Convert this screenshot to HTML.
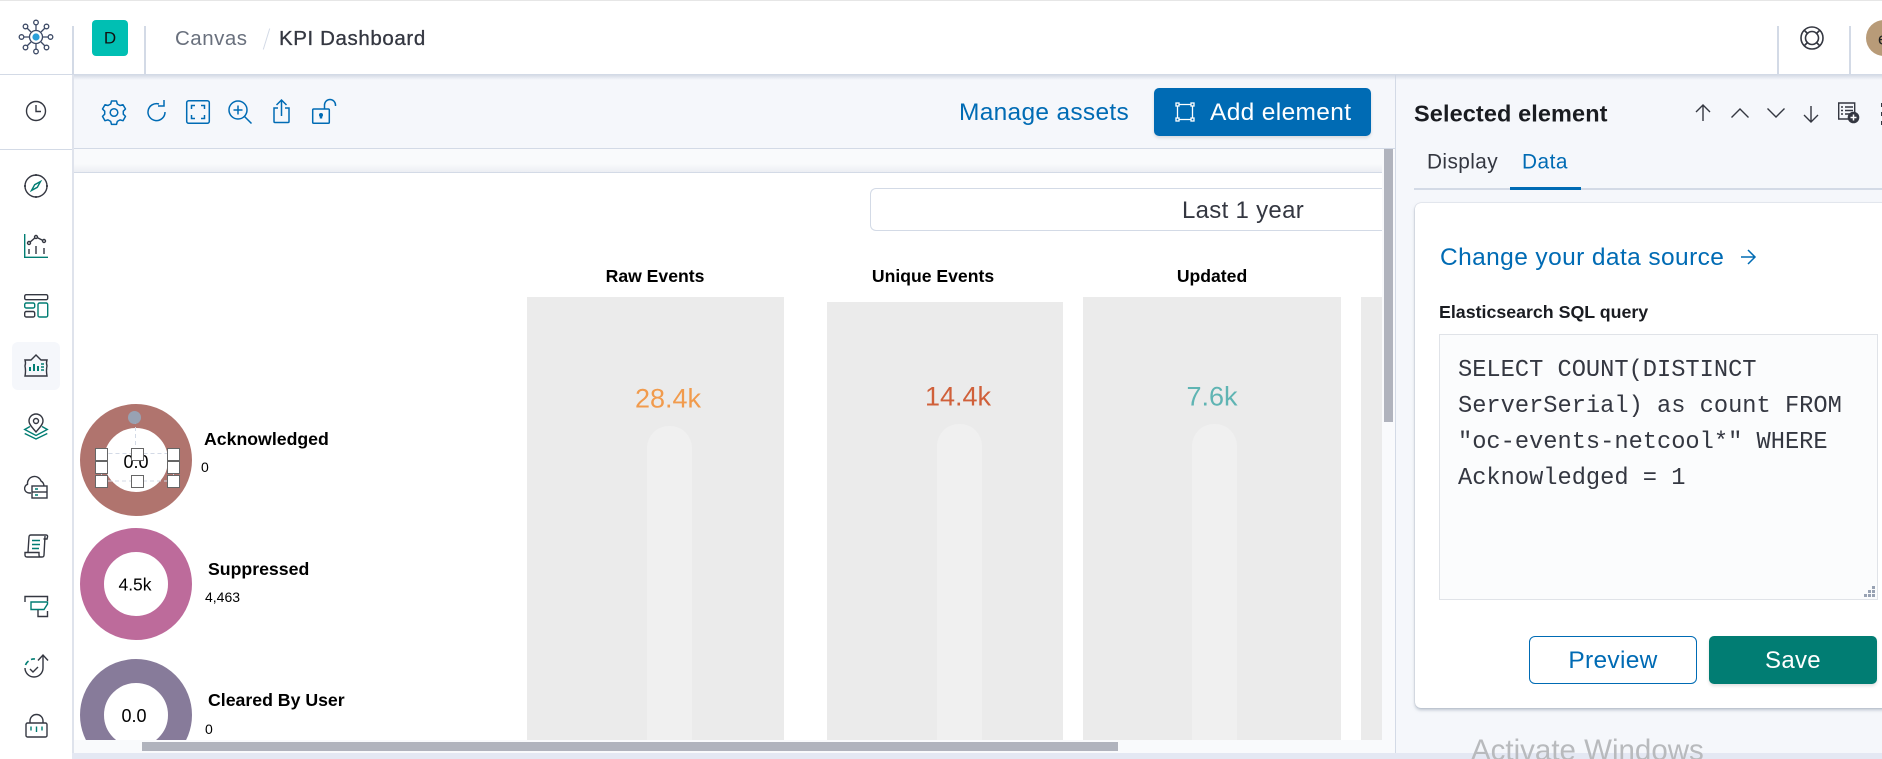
<!DOCTYPE html>
<html><head><meta charset="utf-8"><title>KPI Dashboard</title>
<style>
html,body{margin:0;padding:0;background:#fff}
#p{position:relative;width:1882px;height:759px;overflow:hidden;background:#fff;font-family:"Liberation Sans",sans-serif}
#p div,#p svg,#p span.t{position:absolute}
.t{white-space:nowrap;line-height:1}
.c{transform:translate(-50%,-50%)}
.v{transform:translateY(-50%)}
svg{fill:none;overflow:visible}
.b{stroke:#343741;stroke-width:1.4}
.g{stroke:#017d73;stroke-width:1.4}
.u{stroke:#006bb4;stroke-width:1.5}
.h{width:11px;height:11px;background:#fff;border:1px solid #666;box-sizing:content-box}
</style></head><body><div id="p">

<!-- regions -->
<div style="left:0;top:0;width:1882px;height:1px;background:#e6e6e6"></div>
<div style="left:72px;top:75px;width:1323px;height:73px;background:#f5f7fb"></div>
<div style="left:72px;top:148px;width:1323px;height:1px;background:#d3dae6"></div>
<div style="left:72px;top:149px;width:1323px;height:23px;background:linear-gradient(#f9fafc 65%,#eceef3)"></div>
<div style="left:72px;top:172px;width:1323px;height:1px;background:#d3dae6"></div>
<div style="left:1395px;top:75px;width:487px;height:678px;background:#f5f7fb"></div>
<div style="left:1395px;top:75px;width:1px;height:678px;background:#d3dae6"></div>
<div style="left:72px;top:74px;width:1810px;height:6px;background:linear-gradient(#cfd5e2,#f5f7fb00)"></div>
<div style="left:0;top:74px;width:1882px;height:1px;background:#d3dae6"></div>
<div style="left:72px;top:26px;width:2px;height:48px;background:#d3dae6"></div>
<div style="left:144px;top:26px;width:2px;height:48px;background:#d3dae6"></div>
<div style="left:1777px;top:26px;width:2px;height:48px;background:#d3dae6"></div>
<div style="left:1849px;top:26px;width:2px;height:48px;background:#d3dae6"></div>
<div style="left:72px;top:75px;width:2px;height:684px;background:#dfe3ec"></div>
<div style="left:0;top:149px;width:72px;height:1px;background:#d3dae6"></div>
<div style="left:12px;top:342px;width:48px;height:48px;border-radius:6px;background:#f5f7fb"></div>

<!-- header -->
<svg class="i" style="left:18px;top:19px" width="36" height="36" viewBox="0 0 36 36">
<circle cx="18" cy="18" r="6.500" stroke="#3d4a66" stroke-width="1.300"/><circle cx="18" cy="18" r="3.600" fill="#2b9ed8"/>
<g stroke="#3d4a66" stroke-width="1.300"><path d="M18 6v5M18 25v5M6 18h5M25 18h5M9 9l4 4M27 9l-4 4M9 27l4-4M27 27l-4-4"/>
<circle cx="18" cy="3.500" r="2.300"/><circle cx="18" cy="32.500" r="2.300"/><circle cx="3.500" cy="18" r="2.300"/><circle cx="32.500" cy="18" r="2.300"/>
<circle cx="7.500" cy="7.500" r="2.300"/><circle cx="28.500" cy="7.500" r="2.300"/><circle cx="7.500" cy="28.500" r="2.300"/><circle cx="28.500" cy="28.500" r="2.300"/></g></svg>
<div style="left:92px;top:20px;width:36px;height:36px;border-radius:4px;background:#00bfb3"></div>
<span class="t c" style="left:110px;top:38px;font-size:17px;color:#111">D</span>
<span class="t v" style="left:175px;top:39px;font-size:20.500px;color:#69707d;letter-spacing:.5px">Canvas</span>
<div style="left:266px;top:28px;width:1px;height:22px;background:#d3dae6;transform:rotate(17deg)"></div>
<span class="t v" style="left:279px;top:39px;font-size:20.500px;color:#343741;letter-spacing:.6px;-webkit-text-stroke:.3px #343741">KPI Dashboard</span>
<svg style="left:1800px;top:26px" width="24" height="24" viewBox="0 0 24 24"><g stroke="#343741" stroke-width="1.600"><circle cx="12" cy="12" r="11"/><circle cx="12" cy="12" r="6.500"/><path d="M4 4l4 4M20 4l-4 4M4 20l4-4M20 20l-4-4"/></g></svg>
<div style="left:1866px;top:20px;width:36px;height:36px;border-radius:50%;background:#b89b78"></div>
<span class="t v" style="left:1878px;top:39px;font-size:17px;color:#222">e</span>

<!-- sidebar icons -->
<svg style="left:25px;top:100px" width="22" height="22" viewBox="0 0 22 22"><circle cx="11" cy="11" r="9.500" class="b"/><path d="M11 5v6.500h5" class="b"/></svg>
<svg style="left:24px;top:174px" width="24" height="24" viewBox="0 0 24 24"><circle cx="12" cy="12" r="11" class="b" stroke-width="1.200"/><path d="M12 0v2M12 22v2M0 12h2M22 12h2" class="b"/><path d="M16.500 7.500l-3.200 5.800-5.800 3.200 3.200-5.800z" class="g" stroke-width="1.200"/></svg>
<svg style="left:24px;top:234px" width="24" height="24" viewBox="0 0 24 24"><path d="M.7 0v23.300h23.300" class="g"/><path d="M5 9l7-6 8 4M5 20v-5M12 20v-8M20 20v-6" class="b"/><circle cx="5" cy="9" r="1.500" class="b" fill="#fff"/><circle cx="12" cy="3" r="1.500" class="b" fill="#fff"/><circle cx="20" cy="7" r="1.500" class="b" fill="#fff"/></svg>
<svg style="left:24px;top:294px" width="24" height="24" viewBox="0 0 24 24"><rect x=".7" y=".7" width="23" height="5" rx="1.500" class="b"/><rect x=".7" y="9" width="10" height="5" rx="1.500" class="g"/><rect x=".7" y="17.500" width="10" height="5.500" rx="1.500" class="b"/><rect x="14" y="9" width="9.700" height="14" rx="1.500" class="g"/></svg>
<svg style="left:24px;top:354px" width="24" height="24" viewBox="0 0 24 24"><path d="M1 6h6l5-5 5 5h6q-1 3 0 6-1 4 0 10H1q1-5 0-10 1-3 0-6z" class="b"/><path d="M6 17v-4M10 17v-7M14 17v-5" stroke="#017d73" stroke-width="2"/><path d="M17 10h3M17 13h3M17 16h3" class="g"/></svg>
<svg style="left:24px;top:414px" width="24" height="26" viewBox="0 0 24 26"><path d="M12 18C9 14 5 11 5 7a7 7 0 0 1 14 0c0 4-4 7-7 11z" class="b"/><circle cx="12" cy="7" r="2.500" class="b"/><path d="M6 12.500L.7 15.500 12 21.500l11.300-6L18 12.500M.7 19.500L12 25l11.300-5.500" class="g"/></svg>
<svg style="left:24px;top:474px" width="24" height="24" viewBox="0 0 24 24"><path d="M7 19H5a4.500 4.500 0 0 1-1.500-8.700 7 7 0 0 1 13.500-3.300 6 6 0 0 1 3 5" class="b"/><rect x="8" y="12" width="15" height="12" class="b" fill="#fff"/><path d="M8 18h15" class="b"/><path d="M11 15h3M11 21h3" class="g"/></svg>
<svg style="left:24px;top:534px" width="24" height="24" viewBox="0 0 24 24"><path d="M4 18L5 3q0-2 2-2h15q2 0 1.500 2l-.5 2h-3.500M21 2l-1 19q0 2-2 2H3q-2 0-2-2v-2.500h14V21q0 2 2 2" class="b"/><path d="M8 6.500h8M8 10.500h8M8 14.500h7" stroke="#017d73" stroke-width="1.600"/></svg>
<svg style="left:24px;top:594px" width="24" height="24" viewBox="0 0 24 24"><path d="M1 8V2.500h22.500V7" class="b"/><path d="M7 8h16.500v2L20 15.500H7z" class="g"/><path d="M14 16v6.500h9.500V17" class="b"/></svg>
<svg style="left:24px;top:654px" width="24" height="26" viewBox="0 0 24 26"><path d="M19 1v13a9 9 0 1 1-18 0" class="b"/><path d="M14 6.500L19 1l5 5.500M6 15l3 3 5-5" class="b"/><path d="M1.500 11a9 9 0 0 1 3-4M7 5.500a9 9 0 0 1 4-.5" stroke="#017d73" stroke-width="1.600"/></svg>
<svg style="left:25px;top:714px" width="24" height="24" viewBox="0 0 24 24"><path d="M5 9V7a6 6 0 0 1 13 0v2" class="b"/><rect x="1" y="9" width="21" height="14" rx="1.500" class="b"/><path d="M6 12.500v4M11.500 12.500v5.500M17 12.500v4" class="g"/></svg>

<!-- toolbar icons -->
<svg style="left:102px;top:100px" width="24" height="24" viewBox="0 0 24 24"><path d="M9.500 1h5l.8 3 2.700 1.500 3-.8 2.500 4.300-2.200 2.200v3l2.200 2.200-2.500 4.300-3-.8-2.700 1.500-.8 3h-5l-.8-3L6 19.900l-3 .8L.5 16.400l2.200-2.200v-3L.5 9 3 4.700l3 .8L8.700 4z" class="u" stroke-linejoin="round"/><circle cx="12" cy="12.500" r="3.800" class="u"/></svg>
<svg style="left:147px;top:100px" width="19" height="22" viewBox="0 0 19 22"><path d="M12 4A8.500 8.500 0 1 0 18 12" class="u"/><path d="M17 0v6h-6" class="u"/></svg>
<svg style="left:186px;top:100px" width="24" height="24" viewBox="0 0 24 24"><rect x=".7" y=".7" width="22.600" height="22.600" rx="2" class="u"/><path d="M5.500 9V5.500H9M15 5.500h3.500V9M18.500 15v3.500H15M9 18.500H5.500V15" class="u"/></svg>
<svg style="left:228px;top:100px" width="24" height="24" viewBox="0 0 24 24"><circle cx="10" cy="10" r="9" class="u"/><path d="M10 5.500v9M5.500 10h9M16.500 16.500l7 7" class="u"/></svg>
<svg style="left:273px;top:99px" width="17" height="24" viewBox="0 0 17 24"><path d="M8.500 17V1M3.500 6l5-5 5 5M5 9H1v13.500q0 1 1 1h13q1 0 1-1V9h-4" class="u"/></svg>
<svg style="left:312px;top:100px" width="25" height="24" viewBox="0 0 25 24"><rect x=".7" y="9" width="16.600" height="14.300" rx="1" class="u"/><path d="M12.500 9V5a5.500 5.500 0 0 1 11 0v1" class="u"/><circle cx="9" cy="15" r="2" fill="#006bb4"/><rect x="7.800" y="15" width="2.400" height="3.500" fill="#006bb4"/></svg>

<span class="t v" style="left:959px;top:113px;font-size:24.500px;color:#006bb4;letter-spacing:.3px">Manage assets</span>
<div style="left:1154px;top:88px;width:217px;height:48px;border-radius:5px;background:#006bb4;box-shadow:0 2px 3px #0000001f"></div>
<svg style="left:1175px;top:102px" width="20" height="20" viewBox="0 0 20 20"><g stroke="#fff" stroke-width="1.300"><rect x="1" y="1" width="3" height="3"/><rect x="16" y="1" width="3" height="3"/><rect x="1" y="16" width="3" height="3"/><rect x="16" y="16" width="3" height="3"/><path d="M4 2.500h12M4 17.500h12M2.500 4v12M17.500 4v12"/></g></svg>
<span class="t v" style="left:1210px;top:113px;font-size:24.500px;color:#fff;letter-spacing:.35px">Add element</span>

<!-- canvas: date filter -->
<div style="left:870px;top:188px;width:512px;height:41px;border:1px solid #d3dae6;border-right:0;border-radius:6px 0 0 6px;background:#fff"></div>
<span class="t c" style="left:1243px;top:211px;font-size:24px;color:#343741;letter-spacing:.3px">Last 1 year</span>

<!-- bars -->
<div style="left:527px;top:297px;width:257px;height:443px;background:#ebebeb"></div>
<div style="left:827px;top:302px;width:236px;height:438px;background:#ebebeb"></div>
<div style="left:1083px;top:297px;width:258px;height:443px;background:#ebebeb"></div>
<div style="left:1361px;top:297px;width:21px;height:443px;background:#ebebeb"></div>
<div style="left:647px;top:426px;width:45px;height:314px;border-radius:22px 22px 0 0;background:#f0f0f0"></div>
<div style="left:937px;top:424px;width:45px;height:316px;border-radius:22px 22px 0 0;background:#f0f0f0"></div>
<div style="left:1192px;top:424px;width:45px;height:316px;border-radius:22px 22px 0 0;background:#f0f0f0"></div>

<span class="t c" style="left:655px;top:277px;font-size:17.600px;font-weight:bold;color:#000">Raw Events</span>
<span class="t c" style="left:933px;top:277px;font-size:17.600px;font-weight:bold;color:#000">Unique Events</span>
<span class="t c" style="left:1212px;top:277px;font-size:17.600px;font-weight:bold;color:#000">Updated</span>
<span class="t c" style="left:668px;top:399px;font-size:27px;color:#f19b4d">28.4k</span>
<span class="t c" style="left:958px;top:397px;font-size:27px;color:#d0603a">14.4k</span>
<span class="t c" style="left:1212px;top:397px;font-size:27px;color:#5fb4b3">7.6k</span>

<!-- donuts -->
<div style="left:80px;top:404px;width:64px;height:64px;border:24px solid #b0746e;border-radius:50%"></div>
<div style="left:80px;top:528px;width:64px;height:64px;border:24px solid #bd6b9b;border-radius:50%"></div>
<div style="left:80px;top:659px;width:64px;height:64px;border:24px solid #877b9a;border-radius:50%"></div>
<span class="t c" style="left:136px;top:462px;font-size:18px;color:#000">0.0</span>
<span class="t c" style="left:135px;top:585px;font-size:17.500px;color:#000">4.5k</span>
<span class="t c" style="left:134px;top:716px;font-size:18px;color:#000">0.0</span>
<span class="t v" style="left:204px;top:440px;font-size:17.700px;font-weight:bold;color:#000">Acknowledged</span>
<span class="t v" style="left:201px;top:467px;font-size:14px;color:#000">0</span>
<span class="t v" style="left:208px;top:570px;font-size:17.700px;font-weight:bold;color:#000">Suppressed</span>
<span class="t v" style="left:205px;top:597px;font-size:14px;color:#000">4,463</span>
<span class="t v" style="left:208px;top:701px;font-size:17.700px;font-weight:bold;color:#000">Cleared By User</span>
<span class="t v" style="left:205px;top:729px;font-size:14px;color:#000">0</span>

<!-- selection -->
<svg style="left:95px;top:410px" width="90" height="80"><g stroke="#d3dae6" stroke-width="1" stroke-dasharray="4 3"><rect x="6.500" y="43.500" width="72" height="27.500"/><path d="M40.500 10v33"/></g></svg>
<div style="left:128px;top:411px;width:13px;height:13px;border-radius:50%;background:#98a2b3"></div>
<div class="h" style="left:95px;top:448px"></div>
<div class="h" style="left:131px;top:448px"></div>
<div class="h" style="left:167px;top:448px"></div>
<div class="h" style="left:95px;top:461px"></div>
<div class="h" style="left:167px;top:461px"></div>
<div class="h" style="left:95px;top:475px"></div>
<div class="h" style="left:131px;top:475px"></div>
<div class="h" style="left:167px;top:475px"></div>

<!-- scrollbars -->
<div style="left:74px;top:740px;width:1321px;height:13px;background:#f9fafc"></div>
<div style="left:142px;top:742px;width:976px;height:9px;background:#b0b3bd"></div>
<div style="left:1382px;top:149px;width:13px;height:591px;background:#f9fafc"></div>
<div style="left:1384px;top:149px;width:9px;height:273px;background:#b0b3bd"></div>

<!-- right panel -->
<span class="t v" style="left:1414px;top:114px;font-size:23.500px;font-weight:bold;color:#1a1c21;letter-spacing:.1px">Selected element</span>
<svg style="left:1695px;top:104px" width="16" height="18" viewBox="0 0 16 18"><path d="M8 17V1M1 8l7-7 7 7" class="b"/></svg>
<svg style="left:1731px;top:108px" width="18" height="10" viewBox="0 0 18 10"><path d="M.5 9.500L9 1l8.500 8.500" class="b"/></svg>
<svg style="left:1767px;top:108px" width="18" height="10" viewBox="0 0 18 10"><path d="M.5.500L9 9l8.500-8.500" class="b"/></svg>
<svg style="left:1803px;top:105px" width="16" height="18" viewBox="0 0 16 18"><path d="M8 1v16M1 10l7 7 7-7" class="b"/></svg>
<svg style="left:1838px;top:102px" width="22" height="22" viewBox="0 0 22 22"><path d="M14 17H.7V1h16v9" class="b"/><path d="M3 5h2M7 5h8M3 8.500h2M7 8.500h8M3 12h2M7 12h5" class="b"/><circle cx="15.500" cy="15.500" r="5.800" fill="#343741"/><path d="M15.500 12.500v6M12.500 15.500h6" stroke="#fff" stroke-width="1.500"/></svg>
<div style="left:1881px;top:103px;width:1px;height:22px;background:repeating-linear-gradient(#343741 0 4px,transparent 4px 9px)"></div>

<span class="t v" style="left:1427px;top:163px;font-size:20.800px;color:#343741;letter-spacing:.4px">Display</span>
<span class="t v" style="left:1522px;top:163px;font-size:20.800px;color:#006bb4;letter-spacing:.5px">Data</span>
<div style="left:1414px;top:188px;width:468px;height:2px;background:#d3dae6"></div>
<div style="left:1510px;top:187px;width:71px;height:3px;background:#006bb4"></div>

<div style="left:1415px;top:203px;width:480px;height:505px;border-radius:6px;background:#fff;box-shadow:0 2px 3px #98a2b3a0,0 0 1px #98a2b3"></div>
<span class="t v" style="left:1440px;top:258px;font-size:24.500px;color:#006bb4;letter-spacing:.4px">Change your data source</span>
<svg style="left:1740px;top:249px" width="16" height="16" viewBox="0 0 16 16"><path d="M1 8h13M8 1l7 7-7 7" class="u"/></svg>
<span class="t v" style="left:1439px;top:313px;font-size:17.800px;font-weight:bold;color:#1a1c21">Elasticsearch SQL query</span>
<div style="left:1439px;top:334px;width:437px;height:264px;background:#fbfcfd;border:1px solid #e0e3e8"></div>
<span class="t" style="left:1458px;top:353px;font-family:'Liberation Mono',monospace;font-size:23.700px;line-height:36px;color:#343741;white-space:pre">SELECT COUNT(DISTINCT
ServerSerial) as count FROM
"oc-events-netcool*" WHERE
Acknowledged = 1</span>
<svg style="left:1864px;top:586px" width="12" height="12" viewBox="0 0 12 12"><g fill="#98a2b3"><rect x="8" y="0" width="3" height="3"/><rect x="4" y="4" width="3" height="3"/><rect x="8" y="4" width="3" height="3"/><rect x="0" y="8" width="3" height="3"/><rect x="4" y="8" width="3" height="3"/><rect x="8" y="8" width="3" height="3"/></g></svg>

<div style="left:1529px;top:636px;width:166px;height:46px;border:1px solid #006bb4;border-radius:6px;background:#fff"></div>
<span class="t c" style="left:1613px;top:661px;font-size:24.500px;color:#006bb4;letter-spacing:.3px">Preview</span>
<div style="left:1709px;top:636px;width:168px;height:48px;border-radius:5px;background:#017d73;box-shadow:0 2px 3px #0000001f"></div>
<span class="t c" style="left:1793px;top:661px;font-size:24px;color:#fff;letter-spacing:.3px">Save</span>

<!-- bottom strip -->
<div style="left:72px;top:753px;width:1810px;height:6px;background:#e4e8f3"></div>

<span class="t" style="left:1471px;top:733px;font-size:29.500px;line-height:36px;color:#b8babd">Activate Windows</span>
</div></body></html>
